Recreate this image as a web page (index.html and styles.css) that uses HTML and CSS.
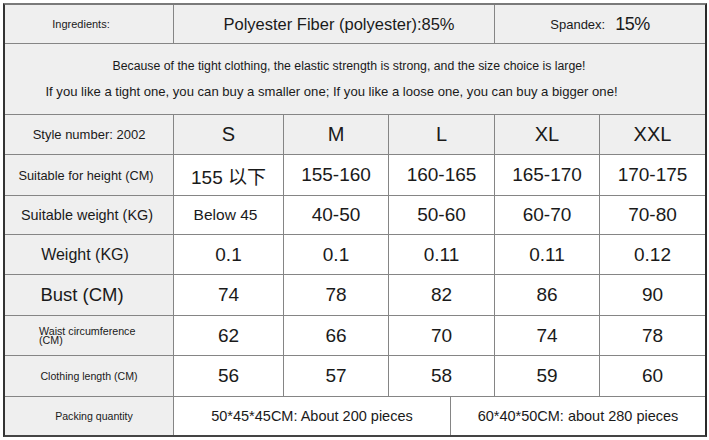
FILE: index.html
```html
<!DOCTYPE html>
<html>
<head>
<meta charset="utf-8">
<link rel="stylesheet" href="styles.css">
</head>
<body>
<div class="chart">
  <div class="cell g c1 ingr">Ingredients:</div>
  <div class="cell g span4 poly">Polyester Fiber (polyester):85%</div>
  <div class="cell g span2"><span class="t13">Spandex:</span><span class="pct">15%</span></div>

  <div class="cell g full desc">
    <p class="d1">Because of the tight clothing, the elastic strength is strong, and the size choice is large!</p>
    <p class="d2">If you like a tight one, you can buy a smaller one; If you like a loose one, you can buy a bigger one!</p>
  </div>

  <div class="cell g c1 t13">Style number: 2002</div>
  <div class="cell g sz">S</div>
  <div class="cell g sz">M</div>
  <div class="cell g sz span2">L</div>
  <div class="cell g sz">XL</div>
  <div class="cell g sz">XXL</div>

  <div class="cell g c1 height">Suitable for height (CM)</div>
  <div class="cell v">155 以下</div>
  <div class="cell v">155-160</div>
  <div class="cell v span2">160-165</div>
  <div class="cell v">165-170</div>
  <div class="cell v">170-175</div>

  <div class="cell g c1 sweight">Suitable weight (KG)</div>
  <div class="cell v below">Below 45</div>
  <div class="cell v">40-50</div>
  <div class="cell v span2">50-60</div>
  <div class="cell v">60-70</div>
  <div class="cell v">70-80</div>

  <div class="cell g c1 weight">Weight (KG)</div>
  <div class="cell v">0.1</div>
  <div class="cell v">0.1</div>
  <div class="cell v span2">0.11</div>
  <div class="cell v">0.11</div>
  <div class="cell v">0.12</div>

  <div class="cell g c1 bust">Bust (CM)</div>
  <div class="cell v">74</div>
  <div class="cell v">78</div>
  <div class="cell v span2">82</div>
  <div class="cell v">86</div>
  <div class="cell v">90</div>

  <div class="cell g c1 waist"><span>Waist circumference<br>(CM)</span></div>
  <div class="cell v">62</div>
  <div class="cell v">66</div>
  <div class="cell v span2">70</div>
  <div class="cell v">74</div>
  <div class="cell v">78</div>

  <div class="cell g c1 small">Clothing length (CM)</div>
  <div class="cell v">56</div>
  <div class="cell v">57</div>
  <div class="cell v span2">58</div>
  <div class="cell v">59</div>
  <div class="cell v">60</div>

  <div class="cell g c1 small pack">Packing quantity</div>
  <div class="cell w span3 t145">50*45*45CM: About 200 pieces</div>
  <div class="cell w span3 t145">60*40*50CM: about 280 pieces</div>
</div>
</body>
</html>
```
FILE: styles.css
```css
html, body {
  margin: 0;
  padding: 0;
  background: #ffffff;
}
body {
  font-family: "Liberation Sans", Arial, "Noto Sans CJK SC", sans-serif;
  color: #1a1a1a;
}
.chart {
  margin: 3px 0 0 3px;
  width: 700px;
  display: grid;
  grid-template-columns: 168px 109px 104px 61px 43px 104px 105px;
  grid-template-rows: 38px 70px 39px 40px 38px 39px 40px 39px 40px 38px;
  gap: 1px;
  background: #858585;
  border-left: 2px solid #333333;
  border-top: 2px solid #7a7a7a;
  border-right: 2px solid #2a2a2a;
  border-bottom: 2px solid #444444;
}
.cell {
  display: flex;
  align-items: center;
  justify-content: center;
  text-align: center;
  white-space: nowrap;
}
.g { background: #efefef; }
.v, .w { background: #ffffff; font-size: 19px; }
.span2 { grid-column: span 2; }
.span3 { grid-column: span 3; }
.span4 { grid-column: span 4; }
.full { grid-column: 1 / -1; }
.t13 { font-size: 13px; }
.t145 { font-size: 14.5px; }
.ingr { font-size: 11px; padding-right: 16px; }
.poly { font-size: 16.5px; padding-left: 10px; }
.height { font-size: 12.8px; padding-right: 6px; }
.sweight { font-size: 14.4px; padding-right: 4px; }
.weight { font-size: 16px; padding-right: 8px; }
.bust { font-size: 18.5px; padding-right: 14px; }
.small { font-size: 10.6px; }
.pack { padding-left: 10px; }
.below { font-size: 15.5px; padding-right: 6px; }
.pct {
  font-size: 18px;
  margin-left: 10px;
  letter-spacing: -0.5px;
}
.sz { font-size: 20px; }
.desc {
  flex-direction: column;
}
.desc p {
  margin: 0;
  line-height: 25px;
}
.d1 { font-size: 12.3px; padding-right: 12px; }
.d2 { font-size: 13.1px; padding-right: 47px; }
.waist {
  justify-content: flex-start;
  text-align: left;
  padding-left: 34px;
  font-size: 10.7px;
  line-height: 9px;
}
```
